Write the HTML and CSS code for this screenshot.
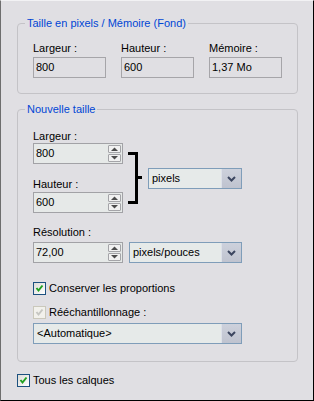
FILE: index.html
```html
<!DOCTYPE html>
<html>
<head>
<meta charset="utf-8">
<link rel="stylesheet" href="styles.css">
</head>
<body>
<div class="dialog">
  <fieldset class="group g1">
    <legend>Taille en pixels / Mémoire (Fond)</legend>
    <div class="g1-body">
      <div class="info-col"><div class="lbl">Largeur :</div><div class="ro">800</div></div>
      <div class="info-col"><div class="lbl">Hauteur :</div><div class="ro">600</div></div>
      <div class="info-col"><div class="lbl">Mémoire :</div><div class="ro">1,37 Mo</div></div>
    </div>
  </fieldset>

  <fieldset class="group g2">
    <legend>Nouvelle taille</legend>
    <div class="g2-body">
      <div class="dims">
        <div class="dim-col">
          <div class="lbl">Largeur :</div>
          <div class="spin"><span class="val">800</span>
            <div class="spin-btns">
              <span class="sbtn"><svg width="11" height="6" viewBox="0 0 11 6"><polygon points="2,5 5.5,1.5 9,5" fill="#4b4b4b"/></svg></span>
              <span class="sbtn"><svg width="11" height="6" viewBox="0 0 11 6"><polygon points="2,1 5.5,4.5 9,1" fill="#4b4b4b"/></svg></span>
            </div>
          </div>
          <div class="lbl lbl-h">Hauteur :</div>
          <div class="spin spin-h"><span class="val">600</span>
            <div class="spin-btns">
              <span class="sbtn"><svg width="11" height="6" viewBox="0 0 11 6"><polygon points="2,5 5.5,1.5 9,5" fill="#4b4b4b"/></svg></span>
              <span class="sbtn"><svg width="11" height="6" viewBox="0 0 11 6"><polygon points="2,1 5.5,4.5 9,1" fill="#4b4b4b"/></svg></span>
            </div>
          </div>
        </div>
        <svg class="bracket" width="25" height="83" viewBox="0 0 25 83">
          <rect x="5" y="22" width="10" height="3" fill="#000"/>
          <rect x="12" y="22" width="3" height="52" fill="#000"/>
          <rect x="5" y="71" width="10" height="3" fill="#000"/>
          <rect x="15" y="46" width="4" height="3" fill="#000"/>
        </svg>
        <div class="combo combo-unit"><span class="val">pixels</span>
          <span class="cbtn"><svg width="9" height="6" viewBox="0 0 9 6"><polyline points="1,1 4.5,4.5 8,1" fill="none" stroke="#3c4660" stroke-width="2"/></svg></span>
        </div>
      </div>

      <div class="lbl lbl-res">Résolution :</div>
      <div class="res-row">
        <div class="spin"><span class="val">72,00</span>
          <div class="spin-btns">
            <span class="sbtn"><svg width="11" height="6" viewBox="0 0 11 6"><polygon points="2,5 5.5,1.5 9,5" fill="#4b4b4b"/></svg></span>
            <span class="sbtn"><svg width="11" height="6" viewBox="0 0 11 6"><polygon points="2,1 5.5,4.5 9,1" fill="#4b4b4b"/></svg></span>
          </div>
        </div>
        <div class="combo combo-res"><span class="val">pixels/pouces</span>
          <span class="cbtn"><svg width="9" height="6" viewBox="0 0 9 6"><polyline points="1,1 4.5,4.5 8,1" fill="none" stroke="#3c4660" stroke-width="2"/></svg></span>
        </div>
      </div>

      <div class="check check-prop">
        <span class="box"><svg width="11" height="11" viewBox="0 0 11 11"><polyline points="2.5,5 4.5,7.5 8.5,2.5" fill="none" stroke="#21a121" stroke-width="2"/></svg></span>
        <span>Conserver les proportions</span>
      </div>
      <div class="check check-resamp">
        <span class="box box-dis"><svg width="11" height="11" viewBox="0 0 11 11"><polyline points="2.5,5 4.5,7.5 8.5,2.5" fill="none" stroke="#c6c6c2" stroke-width="2"/></svg></span>
        <span>Rééchantillonnage :</span>
      </div>
      <div class="combo combo-auto"><span class="val">&lt;Automatique&gt;</span>
        <span class="cbtn"><svg width="9" height="6" viewBox="0 0 9 6"><polyline points="1,1 4.5,4.5 8,1" fill="none" stroke="#3c4660" stroke-width="2"/></svg></span>
      </div>
    </div>
  </fieldset>

  <div class="check check-all">
    <span class="box"><svg width="11" height="11" viewBox="0 0 11 11"><polyline points="2.5,5 4.5,7.5 8.5,2.5" fill="none" stroke="#21a121" stroke-width="2"/></svg></span>
    <span>Tous les calques</span>
  </div>
</div>
</body>
</html>
```

FILE: styles.css
```css
html, body {
  margin: 0;
  padding: 0;
}
body {
  font-family: "Liberation Sans", Arial, sans-serif;
  font-size: 11px;
  line-height: 13px;
  color: #000;
}
.dialog {
  width: 314px;
  height: 401px;
  box-sizing: border-box;
  background: #e0dfe3;
  border: 1px solid;
  border-color: #f2f2f4 #000 #000 #6e6e6e;
  padding: 16px 15px 0 16px;
}
.group {
  margin: 0;
  padding: 0;
  min-width: 0;
  border: 1px solid #c4c3c7;
  border-radius: 4px;
}
.group legend {
  margin-left: 7px;
  padding: 0 2px;
  color: #0046d5;
  line-height: 13px;
}
.g1-body {
  display: flex;
  gap: 15px;
  padding: 12px 15px 15px;
}
.info-col {
  width: 73px;
}
.lbl {
  height: 13px;
}
.ro {
  margin-top: 2px;
  height: 21px;
  box-sizing: border-box;
  border: 1px solid #a6a5a9;
  padding-left: 2px;
  line-height: 19px;
}
.g2 {
  margin-top: 9px;
}
.g2-body {
  padding: 14px 15px 17px;
}
.dims {
  display: flex;
  align-items: flex-start;
}
.dim-col {
  width: 90px;
}
.spin {
  height: 21px;
  box-sizing: border-box;
  border: 1px solid #a2a2a6;
  background: #e6e9e8;
  display: flex;
  align-items: center;
  justify-content: space-between;
  padding-left: 2px;
}
.spin .val {
  line-height: 19px;
}
.spin-btns {
  display: flex;
  flex-direction: column;
  gap: 1px;
  margin-right: 1px;
}
.sbtn {
  width: 13px;
  height: 8px;
  box-sizing: border-box;
  border: 1px solid #a4a4a8;
  border-radius: 1px;
  background: #f1f1f1;
  display: flex;
  align-items: center;
  justify-content: center;
}
.sbtn svg {
  display: block;
}
.lbl-h {
  margin-top: 14px;
}
.spin-h {
  margin-top: 1px;
}
.bracket {
  display: block;
  flex: none;
}
.combo {
  height: 21px;
  box-sizing: border-box;
  border: 1px solid #7f9db9;
  background: #e6eae9;
  display: flex;
  align-items: stretch;
  justify-content: space-between;
  padding-left: 3px;
}
.combo .val {
  line-height: 19px;
}
.cbtn {
  width: 19px;
  background: linear-gradient(#cdd1dc, #bfc3cf);
  border-left: 1px solid #dde1ea;
  display: flex;
  align-items: center;
  justify-content: center;
}
.cbtn svg {
  display: block;
}
.combo-unit {
  width: 94px;
  margin-top: 38px;
}
.lbl-res {
  margin-top: 13px;
}
.res-row {
  margin-top: 3px;
  display: flex;
}
.res-row .spin {
  width: 90px;
}
.combo-res {
  width: 113px;
  margin-left: 6px;
}
.check {
  display: flex;
  align-items: center;
  gap: 3px;
  height: 13px;
}
.box {
  width: 13px;
  height: 13px;
  box-sizing: border-box;
  border: 1px solid #1c5180;
  background: linear-gradient(135deg, #dcdcd7, #ffffff);
  display: flex;
  align-items: center;
  justify-content: center;
}
.box svg {
  display: block;
}
.box-dis {
  border-color: #cac8bb;
  background: #f2f1ec;
}
.check-prop {
  margin-top: 19px;
}
.check-resamp {
  margin-top: 11px;
}
.combo-auto {
  margin-top: 4px;
  width: 209px;
}
.check-all {
  margin-top: 12px;
}
```
